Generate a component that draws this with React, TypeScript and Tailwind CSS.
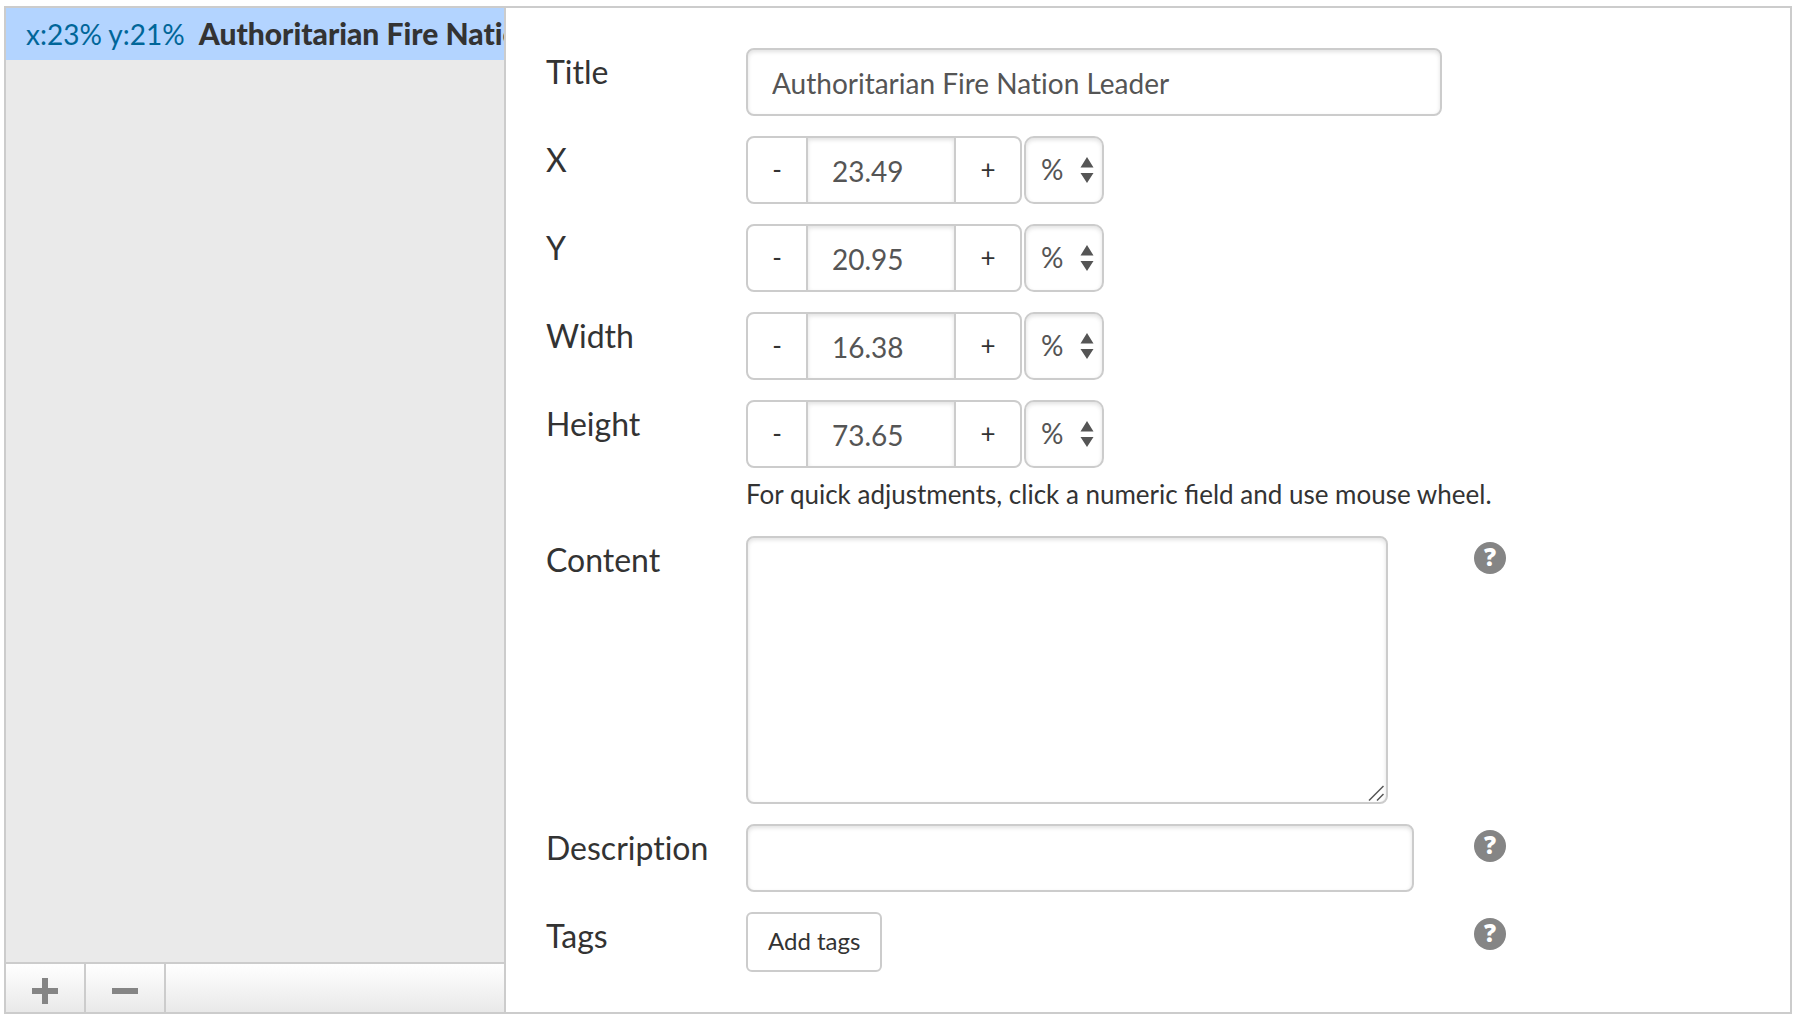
import { useState, type ReactNode } from "react";

const fieldShadow = "shadow-[inset_0_2px_4px_rgba(0,0,0,0.12)]";

function Row({
  label,
  htmlFor,
  help,
  children,
}: {
  label: string;
  htmlFor: string;
  help?: boolean;
  children: ReactNode;
}) {
  return (
    <div className="grid grid-cols-[200px_minmax(0,728px)_auto]">
      <label htmlFor={htmlFor} className="pt-1 text-[32px] leading-10">
        {label}
      </label>
      <div className="min-w-0">{children}</div>
      {help && (
        <button
          type="button"
          aria-label={`Help for ${label}`}
          className="mt-1.5 flex size-8 items-center justify-center rounded-full bg-[#858585] pb-0.5 font-['Open_Sans',sans-serif] text-2xl leading-8 font-extrabold text-white"
        >
          ?
        </button>
      )}
    </div>
  );
}

function NumberField({ id, label, initial }: { id: string; label: string; initial: string }) {
  const [value, setValue] = useState(initial);
  const step = (delta: number) => setValue((Number(value) + delta).toFixed(2));
  return (
    <div className="flex gap-0.5">
      <div className="flex h-[68px] overflow-hidden rounded-lg border-2 border-[#ccc]">
        <button
          type="button"
          aria-label={`Decrease ${label}`}
          onClick={() => step(-1)}
          className="w-[58px] pb-0.5 text-[26px]"
        >
          -
        </button>
        <input
          id={id}
          value={value}
          onChange={(e) => setValue(e.target.value)}
          className={`w-[150px] border-x-2 border-[#ccc] pt-0.5 pl-6 text-[28px] text-[#555] outline-none ${fieldShadow}`}
        />
        <button
          type="button"
          aria-label={`Increase ${label}`}
          onClick={() => step(1)}
          className="w-16 pb-0.5 text-[26px]"
        >
          +
        </button>
      </div>
      <div className="relative">
        <select
          aria-label={`${label} unit`}
          className={`h-[68px] w-20 appearance-none rounded-[10px] border-2 border-[#ccc] bg-white pb-0.5 pl-[15px] text-[28px] text-[#555] outline-none ${fieldShadow}`}
        >
          <option>%</option>
          <option>px</option>
        </select>
        <svg
          viewBox="0 0 14 26"
          className="pointer-events-none absolute top-[21px] right-2.5 h-[26px] w-3.5 fill-[#555]"
          aria-hidden="true"
        >
          <path d="M7 0 13.500 10.500H0.500ZM7 26 0.500 16H13.500Z" />
        </svg>
      </div>
    </div>
  );
}

export default function App() {
  const [title, setTitle] = useState("Authoritarian Fire Nation Leader");
  return (
    <main className="mt-1.5 mr-[18px] ml-1 flex border-2 border-[#ccc] bg-white font-[Lato,sans-serif] text-[#333] [font-variant-ligatures:none]">
      <aside className="flex w-[500px] shrink-0 flex-col border-r-2 border-[#ccc] bg-[#eaeaea]">
        <ul className="flex-1">
          <li>
            <button
              type="button"
              className="block h-[52px] w-full overflow-hidden bg-[#b3d4ff] pb-0.5 pl-5 text-left text-[28px] leading-[50px] whitespace-nowrap"
            >
              <span className="mr-3.5 text-[#006699]">x:23% y:21%</span>
              <span className="text-[30px] font-black">Authoritarian Fire Nation Leader</span>
            </button>
          </li>
        </ul>
        <div className="flex h-[50px] border-t-2 border-[#ccc] bg-linear-to-b from-white to-[#e9e9e9]">
          <button
            type="button"
            aria-label="Add"
            className="flex w-20 items-center justify-center border-r-2 border-[#ccc] pt-1.5"
          >
            <svg viewBox="0 0 26 26" className="size-[26px] fill-[#858585]" aria-hidden="true">
              <path d="M10 0h6v10h10v6H16v10h-6V16H0v-6h10z" />
            </svg>
          </button>
          <button
            type="button"
            aria-label="Remove"
            className="flex w-20 items-center justify-center border-r-2 border-[#ccc] pt-1.5"
          >
            <svg viewBox="0 0 26 26" className="size-[26px] fill-[#858585]" aria-hidden="true">
              <path d="M0 10h26v6H0z" />
            </svg>
          </button>
        </div>
      </aside>

      <form className="flex min-w-0 flex-1 flex-col gap-5 p-10" onSubmit={(e) => e.preventDefault()}>
        <Row label="Title" htmlFor="title">
          <input
            id="title"
            value={title}
            onChange={(e) => setTitle(e.target.value)}
            className={`block h-[68px] w-full max-w-[696px] rounded-lg border-2 border-[#ccc] px-6 pt-0.5 text-[28px] text-[#555] outline-none ${fieldShadow}`}
          />
        </Row>
        <Row label="X" htmlFor="x">
          <NumberField id="x" label="X" initial="23.49" />
        </Row>
        <Row label="Y" htmlFor="y">
          <NumberField id="y" label="Y" initial="20.95" />
        </Row>
        <Row label="Width" htmlFor="width">
          <NumberField id="width" label="Width" initial="16.38" />
        </Row>
        <Row label="Height" htmlFor="height">
          <NumberField id="height" label="Height" initial="73.65" />
          <p className="pt-1 text-[26px] leading-[44px] whitespace-nowrap [font-variant-ligatures:normal]">
            For quick adjustments, click a numeric field and use mouse wheel.
          </p>
        </Row>
        <Row label="Content" htmlFor="content" help>
          <div className="relative max-w-[642px]">
            <textarea
              id="content"
              className={`block h-[268px] w-full resize-none rounded-lg border-2 border-[#ccc] px-6 py-3 text-[28px] text-[#555] outline-none ${fieldShadow}`}
            />
            <svg
              viewBox="0 0 16 16"
              className="pointer-events-none absolute right-1 bottom-[3px] size-4 fill-none stroke-[#555] stroke-[1.5]"
              aria-hidden="true"
            >
              <path d="M1 15.500 15.500 1M9 15.500 15.500 9" />
            </svg>
          </div>
        </Row>
        <Row label="Description" htmlFor="description" help>
          <input
            id="description"
            className={`block h-[68px] w-full max-w-[668px] rounded-lg border-2 border-[#ccc] px-6 pt-0.5 text-[28px] text-[#555] outline-none ${fieldShadow}`}
          />
        </Row>
        <Row label="Tags" htmlFor="tags" help>
          <button
            id="tags"
            type="button"
            className="block h-[60px] rounded-md border-2 border-[#ccc] px-5 pb-0.5 text-2xl"
          >
            Add tags
          </button>
        </Row>
      </form>
    </main>
  );
}
